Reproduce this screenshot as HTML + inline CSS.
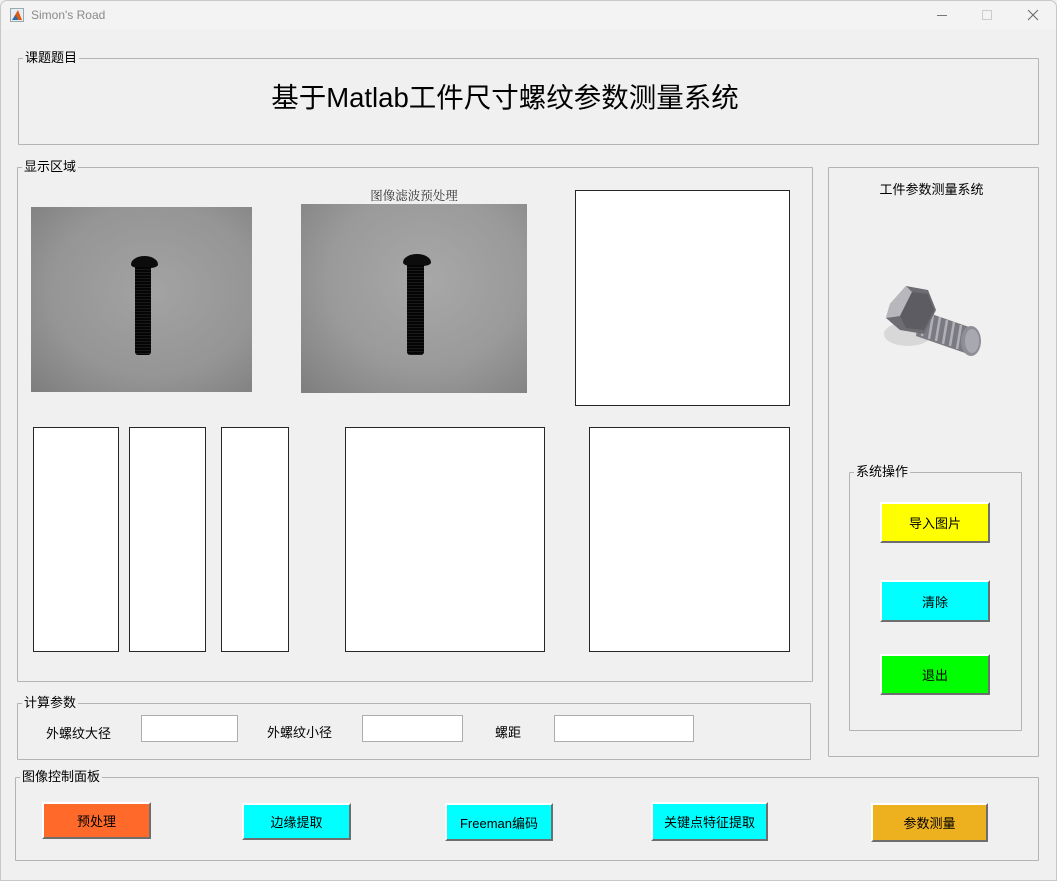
<!DOCTYPE html>
<html><head><meta charset="utf-8">
<style>
*{margin:0;padding:0;box-sizing:border-box}
body{width:1057px;height:881px;background:#f0f0f0;font-family:"Liberation Sans","Noto Sans CJK SC",sans-serif;font-size:13px;color:#000;position:relative;overflow:hidden}
.abs{position:absolute}
.grp{position:absolute;border:1px solid #b4b4b4;border-radius:1px}
.lbl{position:absolute;background:#f0f0f0;padding:0 2px;font-size:13px;line-height:14px;top:-8px;left:4px}
.ax{position:absolute;background:#fff;border:1px solid #262626}
.btn{position:absolute;border-top:2px solid #fff;border-left:2px solid #fff;border-right:2px solid #6e6e6e;border-bottom:2px solid #6e6e6e;display:flex;align-items:center;justify-content:center;font-size:13px}
.inp{position:absolute;background:#fff;border:1px solid #adadad}
.t{position:absolute;font-size:13px}
.img1{position:absolute;background:radial-gradient(ellipse at 55% 45%,#a3a3a3 0%,#959595 60%,#7d7d7d 100%)}
.head{position:absolute;background:#0c0c0c;border-radius:50% 50% 30% 30%/70% 70% 30% 30%}
.shaft{position:absolute;background:repeating-linear-gradient(180deg,#050505 0 2px,#1a1a1a 2px 3px);border-radius:0 0 3px 3px}
</style></head><body>
<div class="abs" style="left:0;top:0;width:1057px;height:881px;border:1px solid #c8c8c8;border-radius:7px 7px 0 0"></div>
<div class="abs" style="left:1px;top:1px;width:1055px;height:29px;background:#f3f3f3;border-radius:7px 7px 0 0"></div>
<div class="abs" style="left:10px;top:8px;width:14px;height:14px;border:1px solid #9aa;background:#e8eef5"></div>
<svg class="abs" style="left:11px;top:9px" width="12" height="12"><polygon points="1,11 7,1 11,11" fill="#e05a10"/><polygon points="1,11 5,6 7,11" fill="#1d6fb8"/></svg>
<div class="abs" style="left:31px;top:8px;font-size:12px;color:#8a8a8a">Simon's Road</div>
<div class="abs" style="left:937px;top:15px;width:10px;height:1px;background:#777"></div>
<div class="abs" style="left:982px;top:10px;width:10px;height:10px;border:1px solid #ccc"></div>
<svg class="abs" style="left:1027px;top:9px" width="12" height="12"><path d="M1 1L11 11M11 1L1 11" stroke="#666" stroke-width="1"/></svg>

<div class="grp" style="left:18px;top:58px;width:1021px;height:87px"><div class="lbl">课题题目</div></div>
<div class="abs" style="left:0;width:1010px;top:82px;text-align:center;font-size:27.5px;line-height:32px">基于Matlab工件尺寸螺纹参数测量系统</div>

<div class="grp" style="left:17px;top:167px;width:796px;height:515px"><div class="lbl">显示区域</div></div>
<div class="img1" style="left:31px;top:207px;width:221px;height:185px"></div>
<div class="head" style="left:131px;top:256px;width:27px;height:12px"></div>
<div class="shaft" style="left:135px;top:267px;width:16px;height:88px"></div>
<div class="abs" style="left:300px;top:186px;width:228px;text-align:center;font-family:'Liberation Serif','Noto Serif CJK SC',serif;font-size:12.5px;color:#333">图像滤波预处理</div>
<div class="img1" style="left:301px;top:204px;width:226px;height:189px;background:radial-gradient(ellipse at 55% 40%,#a8a8a8 0%,#9a9a9a 55%,#7e7e7e 100%)"></div>
<div class="head" style="left:403px;top:254px;width:28px;height:12px"></div>
<div class="shaft" style="left:407px;top:265px;width:17px;height:90px"></div>
<div class="ax" style="left:575px;top:190px;width:215px;height:216px"></div>
<div class="ax" style="left:33px;top:427px;width:86px;height:225px"></div>
<div class="ax" style="left:129px;top:427px;width:77px;height:225px"></div>
<div class="ax" style="left:221px;top:427px;width:68px;height:225px"></div>
<div class="ax" style="left:345px;top:427px;width:200px;height:225px"></div>
<div class="ax" style="left:589px;top:427px;width:201px;height:225px"></div>

<div class="grp" style="left:828px;top:167px;width:211px;height:590px"></div>
<div class="t" style="left:826px;width:211px;text-align:center;top:179px">工件参数测量系统</div>
<svg class="abs" style="left:880px;top:278px" width="110" height="88" viewBox="0 0 110 88">
<ellipse cx="28" cy="56" rx="24" ry="12" fill="#d8d8d8"/>
<path d="M40 32 L92 50 L88 76 L36 58 Z" fill="#7a7a80"/>
<g stroke="#b0b0b8" stroke-width="2.5"><line x1="46" y1="34" x2="42" y2="58"/><line x1="53" y1="37" x2="49" y2="61"/><line x1="60" y1="39" x2="56" y2="63"/><line x1="67" y1="42" x2="63" y2="66"/><line x1="74" y1="44" x2="70" y2="68"/><line x1="81" y1="47" x2="77" y2="71"/></g>
<ellipse cx="91" cy="63" rx="10" ry="15" fill="#8e8e96"/>
<ellipse cx="92" cy="63" rx="7" ry="12" fill="#a8a8b0"/>
<polygon points="10,26 26,8 48,12 56,32 44,56 20,52 6,40" fill="#6c6c72"/>
<polygon points="10,26 26,8 32,14 20,38 6,40" fill="#b8b8bc"/>
<polygon points="20,38 32,14 48,16 54,32 44,52 26,50" fill="#5c5c62"/>
</svg>
<div class="grp" style="left:849px;top:472px;width:173px;height:259px"><div class="lbl">系统操作</div></div>
<div class="btn" style="left:880px;top:502px;width:110px;height:41px;background:#ffff00">导入图片</div>
<div class="btn" style="left:880px;top:580px;width:110px;height:42px;background:#00ffff">清除</div>
<div class="btn" style="left:880px;top:654px;width:110px;height:41px;background:#00ff00">退出</div>

<div class="grp" style="left:17px;top:703px;width:794px;height:57px"><div class="lbl">计算参数</div></div>
<div class="t" style="left:46px;top:723px">外螺纹大径</div>
<div class="inp" style="left:141px;top:715px;width:97px;height:27px"></div>
<div class="t" style="left:267px;top:722px">外螺纹小径</div>
<div class="inp" style="left:362px;top:715px;width:101px;height:27px"></div>
<div class="t" style="left:495px;top:722px">螺距</div>
<div class="inp" style="left:554px;top:715px;width:140px;height:27px"></div>

<div class="grp" style="left:15px;top:777px;width:1024px;height:84px"><div class="lbl">图像控制面板</div></div>
<div class="btn" style="left:42px;top:802px;width:109px;height:37px;background:#ff6a2b">预处理</div>
<div class="btn" style="left:242px;top:803px;width:109px;height:37px;background:#00ffff">边缘提取</div>
<div class="btn" style="left:445px;top:803px;width:108px;height:38px;background:#00ffff">Freeman编码</div>
<div class="btn" style="left:651px;top:802px;width:117px;height:39px;background:#00ffff">关键点特征提取</div>
<div class="btn" style="left:871px;top:803px;width:117px;height:39px;background:#edb120">参数测量</div>
</body></html>
